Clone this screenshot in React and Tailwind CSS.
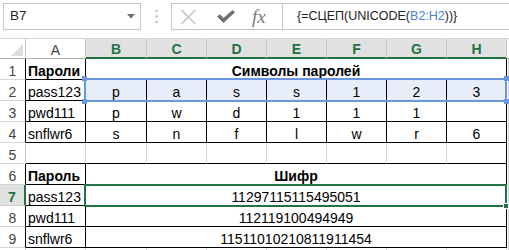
import React from 'react'

const grid = 'grid grid-cols-[26px_60px_61px_60px_60px_60px_60px_60px_60px_1fr] auto-rows-[21px]'
const cell = 'flex items-end overflow-hidden whitespace-nowrap border-r border-b leading-[16px]'

const chars = [
  ['2', 'pass123', ['p', 'a', 's', 's', '1', '2', '3']],
  ['3', 'pwd111', ['p', 'w', 'd', '1', '1', '1', '']],
  ['4', 'snflwr6', ['s', 'n', 'f', 'l', 'w', 'r', '6']],
]

const codes = [
  ['7', 'pass123', '11297115115495051'],
  ['8', 'pwd111', '112119100494949'],
  ['9', 'snflwr6', '11511010210811911454'],
]

function RowHead({ n, edge = 'border-r-black', sel = false }) {
  return sel ? (
    <div className={`${cell} justify-center border-r-2 border-r-[#217346] border-b-[#d4d4d4] bg-[#e1e1e1] font-bold text-[#217346]`}>{n}</div>
  ) : (
    <div className={`${cell} justify-center border-b-[#d4d4d4] bg-white text-[#444] ${edge}`}>{n}</div>
  )
}

function Spare() {
  return <div className={`${cell} border-r-[#d4d4d4] border-b-[#d4d4d4]`} />
}

function FormulaBar() {
  return (
    <div className="flex h-[38px] items-start bg-white pl-[3px] pt-[3px]">
      <div className="flex h-[27px] w-[138px] items-center justify-between border border-[#c6c6c6] pl-[6px] pr-[5px] text-[13.5px] text-[#222]">
        <span>B7</span>
        <svg width="8" height="5" viewBox="0 0 8 5"><path d="M0 0h8L4 4.5z" fill="#6e6e6e" /></svg>
      </div>
      <div className="flex h-[27px] w-[30px] items-center justify-center">
        <svg width="3" height="13" viewBox="0 0 3 13">
          <rect x="0.5" y="0" width="2" height="2" fill="#b4b4b4" />
          <rect x="0.5" y="5.5" width="2" height="2" fill="#b4b4b4" />
          <rect x="0.5" y="11" width="2" height="2" fill="#b4b4b4" />
        </svg>
      </div>
      <div className="flex h-[27px] flex-1 border border-r-0 border-[#c6c6c6]">
        <div className="flex w-[111px] items-center border-r border-r-[#c6c6c6]">
          <svg className="ml-[8px]" width="17" height="16" viewBox="0 0 17 16">
            <path d="M1.5 1l14 14M15.5 1l-14 14" stroke="#c3c3c3" strokeWidth="1.6" />
          </svg>
          <svg className="ml-[20px]" width="18" height="13" viewBox="0 0 18 13">
            <path d="M0 6.5L3 4.2L6.5 8L15.5 0L18 2.3L6.5 13z" fill="#6f6f6f" />
          </svg>
          <span className="ml-[17px] font-['Liberation_Serif',serif] text-[19px] italic leading-none text-[#7a7a7a]">fx</span>
        </div>
        <div className="flex items-center pl-[14px] text-[12.5px] text-[#222]">
          <span>{'{=СЦЕП(UNICODE('}</span>
          <span className="text-[#4a7fd6]">B2:H2</span>
          <span>{'))}'}</span>
        </div>
      </div>
    </div>
  )
}

export default function App() {
  return (
    <div className="h-[250px] w-[509px] overflow-hidden bg-white font-['Liberation_Sans',Arial,sans-serif] text-[14px] text-black">
      <FormulaBar />

      <div className="relative">
        <div className={grid}>
          {/* column headers */}
          <div className="flex items-end justify-end border-t border-r border-b border-t-[#d4d4d4] border-r-[#c8c8c8] border-b-[#ababab] bg-white pb-[2px] pr-[2px]">
            <svg width="12" height="12" viewBox="0 0 12 12"><path d="M12 0v12H0z" fill="#dcdcdc" /></svg>
          </div>
          <div className={`${cell} items-center justify-center border-t border-t-[#d4d4d4] border-r-[#c8c8c8] border-b-[#ababab] bg-white text-[#444]`}>A</div>
          {['B', 'C', 'D', 'E', 'F', 'G', 'H'].map((l) => (
            <div key={l} className={`${cell} items-center justify-center border-t border-b-2 border-t-[#d4d4d4] border-r-[#c8c8c8] border-b-[#217346] bg-[#e1e1e1] font-bold text-[#217346]`}>{l}</div>
          ))}
          <div className="border-t border-b border-t-[#d4d4d4] border-b-[#ababab] bg-white" />

          {/* row 1 */}
          <RowHead n="1" />
          <div className={`${cell} border-r-black border-b-black pl-[2px] font-bold`}>Пароли</div>
          <div className={`${cell} col-span-7 justify-center border-r-black border-b-black font-bold`}>Символы паролей</div>
          <Spare />

          {/* rows 2-4 */}
          {chars.map(([n, pw, list]) => (
            <React.Fragment key={n}>
              <RowHead n={n} />
              <div className={`${cell} border-r-black border-b-black pl-[2px]`}>{pw}</div>
              {list.map((ch, i) => (
                <div key={i} className={`${cell} justify-center border-r-black border-b-black ${n === '2' ? 'bg-[#e8eef9]' : ''}`}>{ch}</div>
              ))}
              <Spare />
            </React.Fragment>
          ))}

          {/* row 5 */}
          <RowHead n="5" edge="border-r-[#c8c8c8]" />
          {Array.from({ length: 8 }).map((_, i) => (
            <div key={i} className={`${cell} ${i === 7 ? 'border-r-black' : 'border-r-[#d4d4d4]'} border-b-black`} />
          ))}
          <Spare />

          {/* row 6 */}
          <RowHead n="6" />
          <div className={`${cell} border-r-black border-b-black pl-[2px] font-bold`}>Пароль</div>
          <div className={`${cell} col-span-7 justify-center border-r-black border-b-black font-bold`}>Шифр</div>
          <Spare />

          {/* rows 7-9 */}
          {codes.map(([n, pw, code]) => (
            <React.Fragment key={n}>
              <RowHead n={n} sel={n === '7'} />
              <div className={`${cell} border-r-black border-b-black pl-[2px]`}>{pw}</div>
              <div className={`${cell} col-span-7 justify-center border-r-black border-b-black`}>{code}</div>
              <Spare />
            </React.Fragment>
          ))}

          {/* row 10, only a sliver is visible */}
          <RowHead n="" edge="border-r-[#c8c8c8]" />
          {Array.from({ length: 9 }).map((_, i) => <Spare key={i} />)}
        </div>

        {/* formula reference highlight B2:H2 */}
        <div className="absolute left-[84px] top-[40px] h-[24px] w-[423px] border-2 border-[#6b97dd]">
          <div className="absolute -left-[4px] -top-[4px] h-[5px] w-[5px] bg-[#6b97dd]" />
          <div className="absolute -right-[4px] -top-[4px] h-[5px] w-[5px] bg-[#6b97dd]" />
          <div className="absolute -left-[4px] -bottom-[4px] h-[5px] w-[5px] bg-[#6b97dd]" />
          <div className="absolute -right-[4px] -bottom-[4px] h-[5px] w-[5px] bg-[#6b97dd]" />
        </div>

        {/* active cell B7 */}
        <div className="absolute left-[84px] top-[146px] h-[23px] w-[423px] border-2 border-[#217346]">
          <div className="absolute -right-[4px] -bottom-[4px] h-[6px] w-[6px] border border-white bg-[#217346]" />
        </div>
      </div>
    </div>
  )
}
